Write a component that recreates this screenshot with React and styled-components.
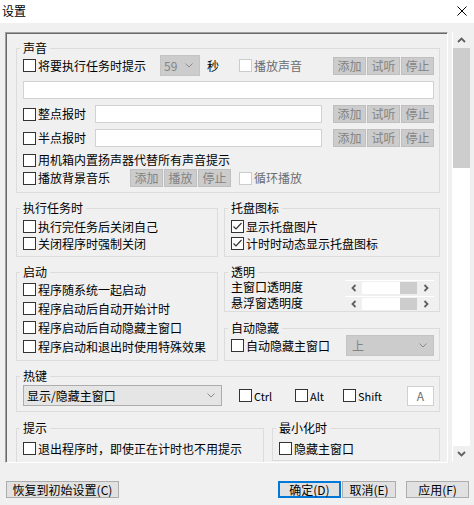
import React from 'react'
import styled, { createGlobalStyle } from 'styled-components'

const GlobalStyle = createGlobalStyle`
  html, body {
    margin: 0;
    padding: 0;
    background: #f0f0f0;
  }
  body {
    font-family: "Noto Sans CJK SC", "Noto Sans", sans-serif;
    font-size: 12px;
    color: #000;
  }
  * {
    box-sizing: border-box;
  }
`

const Window = styled.div`
  width: 474px;
  height: 505px;
  display: flex;
  flex-direction: column;
  background: #f0f0f0;
  overflow: hidden;
`

const TitleBar = styled.div`
  height: 23px;
  background: #fff;
  display: flex;
  align-items: center;
  justify-content: space-between;
  padding: 0 7px 2px 2px;
`

const Title = styled.span`
  font-size: 12px;
  line-height: 14px;
`

const Body = styled.div`
  display: flex;
  flex-direction: column;
  padding: 9px 4px 0 5px;
`

const ScrollArea = styled.div`
  display: flex;
  align-items: flex-start;
  height: 431px;
`

const Frame = styled.div`
  width: 443px;
  height: 431px;
  border: 1px solid;
  border-color: #a0a0a0 #fff #fff #a0a0a0;
  box-shadow: inset 1px 1px 0 #696969;
  overflow: hidden;
  padding: 8px 7px 0 10px;
`

const VScroll = styled.div`
  width: 18px;
  height: 430px;
  margin-left: 4px;
  border-left: 1px solid #fff;
  background: #fff;
  display: flex;
  flex-direction: column;
`

const ScrollBtn = styled.div`
  height: 16px;
  background: #f0f0f0;
  display: flex;
  align-items: center;
  justify-content: center;
`

const ScrollThumb = styled.div`
  height: 120px;
  background: #cdcdcd;
`

const ScrollTrack = styled.div`
  flex: 1;
  background: #fff;
`

const Group = styled.fieldset`
  margin: 0;
  margin-top: ${p => p.$mt || 0}px;
  padding: 0 5px ${p => p.$pb ?? 4}px 6px;
  border: 1px solid #dcdcdc;
  min-width: 0;
  width: ${p => (p.$w ? `${p.$w}px` : 'auto')};
`

const Legend = styled.legend`
  padding: 0 3px;
  margin-left: -3px;
  font-size: 12px;
  line-height: 14px;
`

const Row = styled.div`
  display: flex;
  align-items: center;
  height: ${p => p.$h || 17}px;
  margin-top: ${p => p.$mt || 0}px;
`

const CheckLabel = styled.label`
  display: flex;
  align-items: center;
  flex-shrink: 0;
  width: ${p => (p.$w ? `${p.$w}px` : 'auto')};
  margin-left: ${p => p.$ml || 0}px;
  color: ${p => (p.$disabled ? '#6d6d6d' : '#000')};
`

const Box = styled.span`
  width: 13px;
  height: 13px;
  border: 1px solid ${p => (p.$disabled ? '#cccccc' : '#333')};
  background: #fff;
  display: inline-flex;
  align-items: center;
  justify-content: center;
  flex-shrink: 0;
`

const CheckText = styled.span`
  margin-left: 2px;
  line-height: 14px;
  white-space: nowrap;
  font-size: ${p => (p.$latin ? '11px' : '12px')};
`

const Plain = styled.span`
  margin-left: ${p => p.$ml || 0}px;
  line-height: 12px;
  white-space: nowrap;
`

const BtnGroup = styled.div`
  display: flex;
  gap: 1px;
  margin-left: ${p => (p.$auto ? 'auto' : '0')};
`

const SmallBtn = styled.button`
  width: 33px;
  height: 18px;
  padding: 0;
  margin: 0;
  border: 1px solid #bfbfbf;
  background: #cccccc;
  color: #838383;
  font-family: inherit;
  font-size: 12px;
  line-height: 16px;
`

const TextInput = styled.div`
  height: 18px;
  width: ${p => (p.$w ? `${p.$w}px` : '100%')};
  margin-top: ${p => p.$mt || 0}px;
  background: #fff;
  border: 1px solid #d2d2d2;
  flex-shrink: 0;
`

const Select = styled.div`
  width: ${p => p.$w}px;
  height: 21px;
  margin-left: ${p => (p.$auto ? 'auto' : '0')};
  display: flex;
  align-items: center;
  padding: 0 6px 0 ${p => p.$pl || 3}px;
  border: 1px solid ${p => (p.$disabled ? '#c4c4c4' : '#adadad')};
  background: ${p => (p.$disabled ? '#cccccc' : '#e5e5e5')};
  color: ${p => (p.$disabled ? '#838383' : '#000')};
  flex-shrink: 0;
  line-height: 14px;
  white-space: nowrap;

  svg {
    margin-left: auto;
  }
`

const KeyBox = styled.div`
  width: 27px;
  height: 20px;
  margin-left: auto;
  background: #fff;
  border: 1px solid #d0d0d0;
  color: #6d6d6d;
  display: flex;
  align-items: center;
  justify-content: center;
  font-size: 12px;
`

const TwoCol = styled.div`
  display: grid;
  grid-template-columns: 202px 216px;
  column-gap: 6px;
  row-gap: 8px;
  margin-top: 8px;
`

const Stack = styled.div`
  display: flex;
  flex-direction: column;
  gap: 9px;
`

const BottomRow = styled.div`
  display: flex;
  align-items: flex-start;
  gap: 8px;
  margin-top: 9px;
`

const Slider = styled.div`
  width: 89px;
  height: 14px;
  margin-left: auto;
  display: flex;
  border-top: 1px solid #fff;
  padding-top: 1px;
  background: #f0f0f0;
`

const SliderArrow = styled.div`
  width: 17px;
  display: flex;
  align-items: center;
  justify-content: center;
`

const SliderTrack = styled.div`
  flex: 1;
  background: #fff;
  display: flex;
  justify-content: flex-end;
`

const SliderThumb = styled.div`
  width: 17px;
  background: #cdcdcd;
`

const Footer = styled.div`
  display: flex;
  margin-top: 18px;
  padding: 0 1px 0 1px;
`

const FootBtn = styled.button`
  width: ${p => p.$w}px;
  height: 17px;
  padding: 0;
  margin: 0 0 0 ${p => p.$ml || 0}px;
  border: 1px solid ${p => (p.$primary ? '#0078d7' : '#adadad')};
  box-shadow: ${p => (p.$primary ? 'inset 0 0 0 1px #0078d7' : 'none')};
  background: #e1e1e1;
  color: #000;
  font-family: inherit;
  font-size: 12px;
  line-height: 15px;
  white-space: nowrap;
`

const Spacer = styled.div`
  flex: 1;
`

const Chevron = () => (
  <svg width="8" height="5" viewBox="0 0 8 5">
    <polyline points="0.5,0.5 4,4 7.5,0.5" fill="none" stroke="#8a8a8a" strokeWidth="1" />
  </svg>
)

const Check = ({ label, checked, disabled, w, ml, latin }) => (
  <CheckLabel $w={w} $ml={ml} $disabled={disabled}>
    <Box $disabled={disabled}>
      {checked && (
        <svg width="11" height="11" viewBox="0 0 11 11">
          <polyline points="1.5,5.5 4,8 9.5,2" fill="none" stroke="#333" strokeWidth="1.2" />
        </svg>
      )}
    </Box>
    <CheckText $latin={latin}>{label}</CheckText>
  </CheckLabel>
)

const Buttons = ({ labels, auto }) => (
  <BtnGroup $auto={auto}>
    {labels.map(l => (
      <SmallBtn key={l} disabled>{l}</SmallBtn>
    ))}
  </BtnGroup>
)

const TransSlider = () => (
  <Slider>
    <SliderArrow>
      <svg width="6" height="8" viewBox="0 0 6 8">
        <polyline points="4.5,1 1.5,4 4.5,7" fill="none" stroke="#606060" strokeWidth="1.8" />
      </svg>
    </SliderArrow>
    <SliderTrack>
      <SliderThumb />
    </SliderTrack>
    <SliderArrow>
      <svg width="6" height="8" viewBox="0 0 6 8">
        <polyline points="1.5,1 4.5,4 1.5,7" fill="none" stroke="#606060" strokeWidth="1.8" />
      </svg>
    </SliderArrow>
  </Slider>
)

const App = () => {
  return (
    <Window>
      <GlobalStyle />
      <TitleBar>
        <Title>设置</Title>
        <svg width="10" height="10" viewBox="0 0 10 10">
          <path d="M0.5 0.5 L9.5 9.5 M9.5 0.5 L0.5 9.5" stroke="#000" strokeWidth="1" />
        </svg>
      </TitleBar>
      <Body>
        <ScrollArea>
          <Frame>
            <Group $pb={5}>
              <Legend>声音</Legend>
              <Row $h={21}>
                <Check w={137} label="将要执行任务时提示" />
                <Select $w={40} $disabled>59<Chevron /></Select>
                <Plain $ml={7}>秒</Plain>
                <Check ml={20} disabled label="播放声音" />
                <Buttons auto labels={['添加', '试听', '停止']} />
              </Row>
              <TextInput $mt={5} />
              <Row $h={18} $mt={6}>
                <Check w={72} label="整点报时" />
                <TextInput $w={227} />
                <Buttons auto labels={['添加', '试听', '停止']} />
              </Row>
              <Row $h={18} $mt={6}>
                <Check w={72} label="半点报时" />
                <TextInput $w={227} />
                <Buttons auto labels={['添加', '试听', '停止']} />
              </Row>
              <Row $h={18} $mt={4}>
                <Check label="用机箱内置扬声器代替所有声音提示" />
              </Row>
              <Row $h={18}>
                <Check w={107} label="播放背景音乐" />
                <Buttons labels={['添加', '播放', '停止']} />
                <Check ml={8} disabled label="循环播放" />
              </Row>
            </Group>

            <TwoCol>
              <Group>
                <Legend>执行任务时</Legend>
                <Row $mt={3}><Check label="执行完任务后关闭自己" /></Row>
                <Row><Check label="关闭程序时强制关闭" /></Row>
              </Group>
              <Group>
                <Legend>托盘图标</Legend>
                <Row $mt={3}><Check checked label="显示托盘图片" /></Row>
                <Row><Check checked label="计时时动态显示托盘图标" /></Row>
              </Group>
              <Group $pb={4}>
                <Legend>启动</Legend>
                <Row $h={19} $mt={1}><Check label="程序随系统一起启动" /></Row>
                <Row $h={19}><Check label="程序启动后自动开始计时" /></Row>
                <Row $h={19}><Check label="程序启动后自动隐藏主窗口" /></Row>
                <Row $h={19}><Check label="程序启动和退出时使用特殊效果" /></Row>
              </Group>
              <Stack>
                <Group $pb={0}>
                  <Legend>透明</Legend>
                  <Row $h={16}>
                    <Plain>主窗口透明度</Plain>
                    <TransSlider />
                  </Row>
                  <Row $h={16}>
                    <Plain>悬浮窗透明度</Plain>
                    <TransSlider />
                  </Row>
                </Group>
                <Group $pb={4}>
                  <Legend>自动隐藏</Legend>
                  <Row $h={21}>
                    <Check label="自动隐藏主窗口" />
                    <Select $w={88} $disabled $auto $pl={5}>上<Chevron /></Select>
                  </Row>
                </Group>
              </Stack>
            </TwoCol>

            <Group $mt={8} $pb={5}>
              <Legend>热键</Legend>
              <Row $h={21} $mt={2}>
                <Select $w={199}>显示/隐藏主窗口<Chevron /></Select>
                <Check ml={17} w={56} latin label="Ctrl" />
                <Check w={48} latin label="Alt" />
                <Check latin label="Shift" />
                <KeyBox>A</KeyBox>
              </Row>
            </Group>

            <BottomRow>
              <Group $w={248} $pb={20}>
                <Legend>提示</Legend>
                <Row $mt={5}><Check label="退出程序时，即使正在计时也不用提示" /></Row>
              </Group>
              <Group $w={168} $pb={3}>
                <Legend>最小化时</Legend>
                <Row $mt={5}><Check label="隐藏主窗口" /></Row>
              </Group>
            </BottomRow>
          </Frame>
          <VScroll>
            <ScrollBtn>
              <svg width="9" height="6" viewBox="0 0 9 6">
                <polyline points="1,5 4.5,1.5 8,5" fill="none" stroke="#606060" strokeWidth="1.8" />
              </svg>
            </ScrollBtn>
            <ScrollThumb />
            <ScrollTrack />
            <ScrollBtn>
              <svg width="9" height="6" viewBox="0 0 9 6">
                <polyline points="1,1 4.5,4.5 8,1" fill="none" stroke="#606060" strokeWidth="1.8" />
              </svg>
            </ScrollBtn>
          </VScroll>
        </ScrollArea>
        <Footer>
          <FootBtn $w={113}>恢复到初始设置(C)</FootBtn>
          <Spacer />
          <FootBtn $w={63} $primary>确定(D)</FootBtn>
          <FootBtn $w={54} $ml={1}>取消(E)</FootBtn>
          <FootBtn $w={63} $ml={10}>应用(F)</FootBtn>
        </Footer>
      </Body>
    </Window>
  )
}

export default App
